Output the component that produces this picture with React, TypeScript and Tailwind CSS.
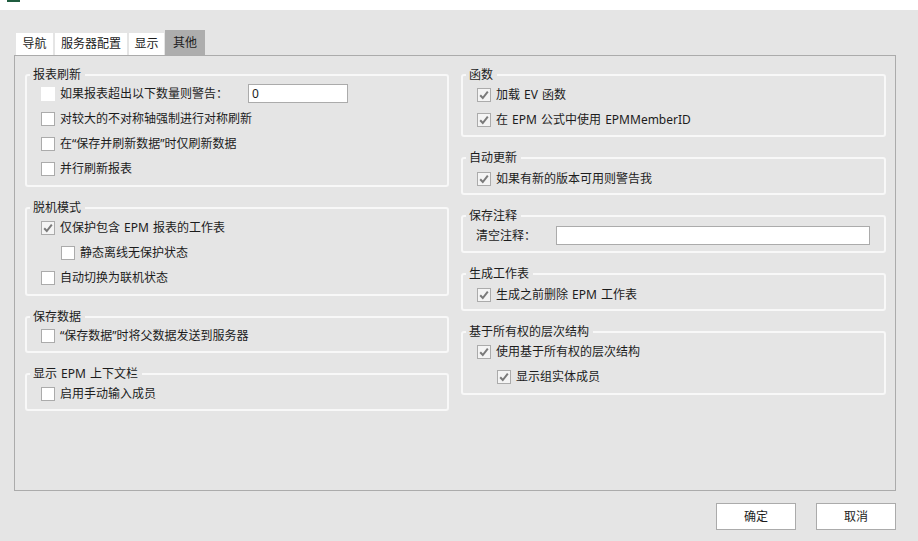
import React from 'react';

const Check: React.FC<{ on?: boolean; plain?: boolean }> = ({ on, plain }) => (
  <span className={`flex h-[14px] w-[14px] shrink-0 items-center justify-center ${on ? 'bg-[#f4f4f4]' : 'bg-white'} ${plain ? '' : 'border border-[#ababab]'}`}>
    {on && (
      <svg width="10" height="10" viewBox="0 0 10 10" fill="none">
        <path d="M1.2 5.2 L3.8 8 L8.8 1.6" stroke="#7a7a7a" strokeWidth="2" />
      </svg>
    )}
  </span>
);

const Row: React.FC<{ label: string; on?: boolean; nested?: boolean; plain?: boolean; children?: React.ReactNode }> = ({ label, on, nested, plain, children }) => (
  <div className={`flex h-[25px] items-center ${nested ? 'pl-[34px]' : 'pl-[14px]'}`}>
    <Check on={on} plain={plain} />
    <span className="ml-[5px] whitespace-nowrap">{label}</span>
    {children}
  </div>
);

// h and pt vary per group, the original dialog is not quite regular
const Group: React.FC<{ title: string; box: string; children: React.ReactNode }> = ({ title, box, children }) => (
  <div className={`relative rounded-[3px] border-2 border-[#f8f8f8] ${box}`}>
    <span className="absolute -top-[9px] left-[3px] bg-[#e5e5e5] pl-[3px] pr-[4px] leading-[16px] whitespace-nowrap">{title}</span>
    {children}
  </div>
);

const Tab: React.FC<{ label: string; w: string; active?: boolean }> = ({ label, w, active }) => (
  <div className={`flex items-center justify-center ${w} ${active ? 'h-[25px] bg-[#adadad]' : 'h-[22px] bg-white pb-[1px]'}`}>{label}</div>
);

export default function App() {
  return (
    <div className="flex h-[541px] w-[918px] flex-col overflow-hidden bg-[#e5e5e5] font-['Noto_Sans','Noto_Sans_CJK_SC',sans-serif] text-[12px] text-[#1c1c1c] [word-spacing:1px]">
      <div className="h-[10px] bg-white pl-[7px]">
        <div className="h-[2px] w-[13px] bg-[#1f5c3f]" />
      </div>

      <div className="flex items-end pl-[16px] pt-[20px]">
        <Tab label="导航" w="w-[37px]" />
        <Tab label="服务器配置" w="ml-[2px] w-[72px]" />
        <Tab label="显示" w="ml-[2px] w-[35px]" />
        <Tab label="其他" w="ml-[1px] w-[40px]" active />
      </div>

      <div className="ml-[14px] flex h-[436px] w-[882px] gap-[12px] border border-[#ababab] pl-[10px] pt-[18px]">
        <div className="flex w-[424px] flex-col gap-[20px]">
          <Group title="报表刷新" box="h-[113px] pt-[5px]">
            <Row label="如果报表超出以下数量则警告：" plain>
              <div className="absolute left-[221px] top-[8px] flex h-[19px] w-[100px] items-center border border-[#ababab] bg-white pl-[3px]">0</div>
            </Row>
            <Row label="对较大的不对称轴强制进行对称刷新" />
            <Row label="在“保存并刷新数据”时仅刷新数据" />
            <Row label="并行刷新报表" />
          </Group>
          <Group title="脱机模式" box="h-[89px] pt-[6px]">
            <Row label="仅保护包含 EPM 报表的工作表" on />
            <Row label="静态离线无保护状态" nested />
            <Row label="自动切换为联机状态" />
          </Group>
          <Group title="保存数据" box="h-[37px] pt-[5px]">
            <Row label="“保存数据”时将父数据发送到服务器" />
          </Group>
          <Group title="显示 EPM 上下文栏" box="h-[38px] pt-[6px]">
            <Row label="启用手动输入成员" />
          </Group>
        </div>

        <div className="flex w-[425px] flex-col gap-[20px]">
          <Group title="函数" box="h-[63px] pt-[6px]">
            <Row label="加载 EV 函数" on />
            <Row label="在 EPM 公式中使用 EPMMemberID" on />
          </Group>
          <Group title="自动更新" box="h-[38px] pt-[7px]">
            <Row label="如果有新的版本可用则警告我" on />
          </Group>
          <Group title="保存注释" box="h-[38px] pt-[6px]">
            <div className="flex h-[25px] items-center pl-[13px]">
              <span className="w-[80px]">清空注释：</span>
              <div className="h-[19px] w-[314px] border border-[#ababab] bg-white" />
            </div>
          </Group>
          <Group title="生成工作表" box="h-[38px] pt-[7px]">
            <Row label="生成之前删除 EPM 工作表" on />
          </Group>
          <Group title="基于所有权的层次结构" box="h-[64px] pt-[6px]">
            <Row label="使用基于所有权的层次结构" on />
            <Row label="显示组实体成员" on nested />
          </Group>
        </div>
      </div>

      <div className="flex justify-end gap-[20px] pr-[22px] pt-[12px]">
        <button className="h-[27px] w-[80px] border border-[#ababab] bg-white">确定</button>
        <button className="h-[27px] w-[80px] border border-[#ababab] bg-white">取消</button>
      </div>
    </div>
  );
}
